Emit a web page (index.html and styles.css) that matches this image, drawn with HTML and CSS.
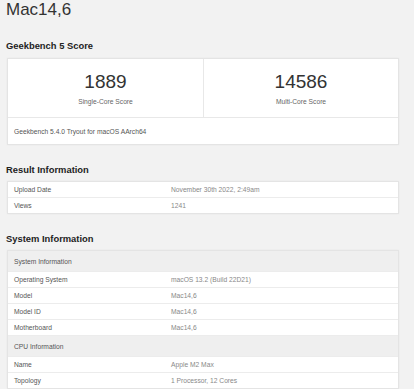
FILE: index.html
```html
<!DOCTYPE html>
<html lang="en">
<head>
<meta charset="utf-8">
<title>Mac14,6 - Geekbench Browser</title>
<link rel="stylesheet" href="styles.css">
</head>
<body>
<div class="page">
  <h1 class="title">Mac14,6</h1>

  <h2 class="section-heading first">Geekbench 5 Score</h2>
  <div class="card">
    <div class="scores">
      <div class="score-cell">
        <div class="score">1889</div>
        <div class="score-label">Single-Core Score</div>
      </div>
      <div class="score-cell">
        <div class="score">14586</div>
        <div class="score-label">Multi-Core Score</div>
      </div>
    </div>
    <div class="card-footer">Geekbench 5.4.0 Tryout for macOS AArch64</div>
  </div>

  <h2 class="section-heading">Result Information</h2>
  <div class="table">
    <div class="row"><div class="name">Upload Date</div><div class="value">November 30th 2022, 2:49am</div></div>
    <div class="row"><div class="name">Views</div><div class="value">1241</div></div>
  </div>

  <h2 class="section-heading">System Information</h2>
  <div class="table">
    <div class="row head"><div class="name">System Information</div></div>
    <div class="row"><div class="name">Operating System</div><div class="value">macOS 13.2 (Build 22D21)</div></div>
    <div class="row"><div class="name">Model</div><div class="value">Mac14,6</div></div>
    <div class="row"><div class="name">Model ID</div><div class="value">Mac14,6</div></div>
    <div class="row"><div class="name">Motherboard</div><div class="value">Mac14,6</div></div>
    <div class="row head"><div class="name">CPU Information</div></div>
    <div class="row"><div class="name">Name</div><div class="value">Apple M2 Max</div></div>
    <div class="row"><div class="name">Topology</div><div class="value">1 Processor, 12 Cores</div></div>
  </div>
</div>
</body>
</html>
```

FILE: styles.css
```css
html {
  overflow: hidden;
}
body {
  margin: 0;
  background: #f2f2f2;
  font-family: "Liberation Sans", Arial, sans-serif;
  color: #333;
}
.page {
  width: 394px;
  margin-left: 6px;
}
.title {
  margin: 0;
  font-size: 17px;
  line-height: 20px;
  font-weight: normal;
  color: #333;
}
.section-heading {
  margin: 19px 0 6px;
  font-size: 9.4px;
  line-height: 11px;
  font-weight: bold;
  color: #222;
}
.section-heading.first {
  margin: 20px 0 7px;
}
.card,
.table {
  margin: 0 1px;
  background: #fff;
  border: 1px solid #e4e4e4;
  box-shadow: 0 0 2px rgba(0, 0, 0, 0.05);
}
.scores {
  display: grid;
  grid-template-columns: 1fr 1fr;
  border-bottom: 1px solid #e8e8e8;
}
.score-cell {
  padding: 12px 0 11px;
  text-align: center;
}
.score-cell + .score-cell {
  border-left: 1px solid #e8e8e8;
}
.score {
  font-size: 19px;
  line-height: 22px;
  color: #333;
}
.score-label {
  margin-top: 4px;
  font-size: 6.7px;
  line-height: 9px;
  color: #666;
}
.card-footer {
  padding: 9px 6px 8px;
  font-size: 6.7px;
  line-height: 9px;
  color: #555;
}
.row {
  display: grid;
  grid-template-columns: 157px 1fr;
  height: 15px;
  align-items: center;
  font-size: 6.7px;
  line-height: 9px;
}
.row + .row {
  border-top: 1px solid #ececec;
}
.row.head {
  height: 20px;
  background: #efefef;
}
.name {
  padding-left: 6px;
  color: #555;
}
.value {
  padding-left: 6px;
  color: #888;
}
```
